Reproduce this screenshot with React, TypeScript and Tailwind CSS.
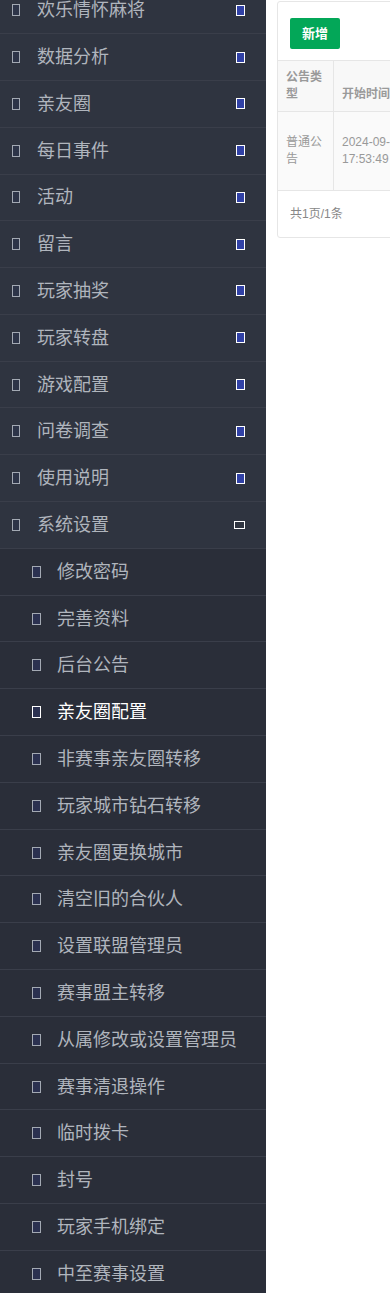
const topItems = [
  '欢乐情怀麻将',
  '数据分析',
  '亲友圈',
  '每日事件',
  '活动',
  '留言',
  '玩家抽奖',
  '玩家转盘',
  '游戏配置',
  '问卷调查',
  '使用说明',
]

const subItems = [
  '修改密码',
  '完善资料',
  '后台公告',
  '亲友圈配置',
  '非赛事亲友圈转移',
  '玩家城市钻石转移',
  '亲友圈更换城市',
  '清空旧的合伙人',
  '设置联盟管理员',
  '赛事盟主转移',
  '从属修改或设置管理员',
  '赛事清退操作',
  '临时拨卡',
  '封号',
  '玩家手机绑定',
  '中至赛事设置',
]

const ACTIVE = '亲友圈配置'

function LeftIcon() {
  return <span className="block w-[8px] h-[12px] border border-[#a3a9b3] bg-[#2d3448] shrink-0" />
}

function TopRow({ label, open }: { label: string; open?: boolean }) {
  return (
    <div className="flex items-center h-[46.8px] border-b border-[#3a3e4a] bg-[#2f3440] pl-3 pr-[21px]">
      <LeftIcon />
      <span className="ml-[17px] flex-1 text-[18px] leading-none text-[#b0b5bd]">{label}</span>
      {open ? (
        <span className="block w-[11px] h-[8px] border-[1.5px] border-white bg-[#2f3440]" />
      ) : (
        <span className="block w-[9px] h-[11px] border-[1.5px] border-white bg-[#3141a6]" />
      )}
    </div>
  )
}

function SubRow({ label }: { label: string }) {
  const active = label === ACTIVE
  return (
    <div className="flex items-center h-[46.8px] border-b border-[#3a3e4a] bg-[#2a2e39] pl-8">
      <span
        className={`block w-[9px] h-[12px] border shrink-0 bg-[#2b3150] ${active ? 'border-white' : 'border-[#a3a9b3]'}`}
      />
      <span className={`ml-4 text-[18px] leading-none ${active ? 'text-white' : 'text-[#b0b5bd]'}`}>{label}</span>
    </div>
  )
}

export default function App() {
  return (
    <div
      className="flex w-[390px] h-[1293px] overflow-hidden bg-white"
      style={{ fontFamily: '"Liberation Sans", "Noto Sans CJK SC", sans-serif' }}
    >
      {/* Sidebar */}
      <aside className="w-[266px] shrink-0 bg-[#2a2e39]">
        <div className="-mt-[12.7px]">
          {topItems.map((t) => (
            <TopRow key={t} label={t} />
          ))}
          <TopRow label="系统设置" open />
          {subItems.map((t) => (
            <SubRow key={t} label={t} />
          ))}
        </div>
      </aside>

      {/* Content */}
      <main className="flex-1 min-w-0 pl-[11px] pt-[1px]">
        <div className="w-[420px] border border-[#e6e6e6] rounded-[3px] bg-white">
          <div className="h-[58px] px-3 pt-4">
            <button className="w-[50px] h-[31px] rounded-[2px] bg-[#03a758] text-white text-[13px] font-bold">
              新增
            </button>
          </div>
          <div className="flex border-t border-[#e6e6e6] bg-[#f8f8f8] h-[51px]">
            <div className="w-[56px] shrink-0 border-r border-[#e6e6e6] px-2 pb-[8px] flex items-end">
              <span className="text-[12px] leading-[17px] font-bold text-[#9a9a9a]">公告类型</span>
            </div>
            <div className="w-[90px] shrink-0 border-r border-[#e6e6e6] px-2 pb-[8px] flex items-end">
              <span className="text-[12px] leading-[17px] font-bold text-[#9a9a9a] whitespace-nowrap">开始时间</span>
            </div>
            <div className="flex-1" />
          </div>
          <div className="flex border-t border-[#e6e6e6] bg-[#fafafa] h-[79px]">
            <div className="w-[56px] shrink-0 border-r border-[#e6e6e6] px-2 flex items-center">
              <span className="text-[12px] leading-[17px] text-[#999]">普通公告</span>
            </div>
            <div className="w-[90px] shrink-0 border-r border-[#e6e6e6] px-2 flex items-center">
              <span className="text-[12px] leading-[17px] text-[#999]">
                2024-09-12
                <br />
                17:53:49
              </span>
            </div>
            <div className="flex-1" />
          </div>
          <div className="border-t border-[#e6e6e6] h-[47px] px-3 flex items-center">
            <span className="text-[12px] text-[#888]">共1页/1条</span>
          </div>
        </div>
      </main>
    </div>
  )
}
